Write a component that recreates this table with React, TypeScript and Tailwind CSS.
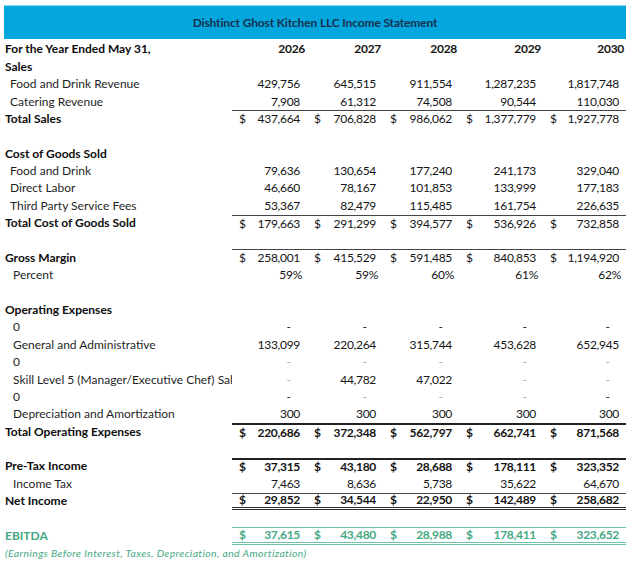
import React from "react";

type Row = {
  label?: string;
  kind?: "bold" | "sub" | "sub2" | "green" | "blank";
  vals?: string[];
  dollar?: boolean;
  boldVals?: boolean;
  top?: "thin" | "thick" | "green";
  bottom?: "double" | "greenDouble";
  dashTone?: string[];
  pct?: boolean;
  years?: boolean;
};

const rows: Row[] = [
  { label: "For the Year Ended May 31,", kind: "bold", vals: ["2026", "2027", "2028", "2029", "2030"], years: true },
  { label: "Sales", kind: "bold" },
  { label: "Food and Drink Revenue", kind: "sub", vals: ["429,756", "645,515", "911,554", "1,287,235", "1,817,748"] },
  { label: "Catering Revenue", kind: "sub", vals: ["7,908", "61,312", "74,508", "90,544", "110,030"] },
  { label: "Total Sales", kind: "bold", vals: ["437,664", "706,828", "986,062", "1,377,779", "1,927,778"], dollar: true, top: "thin" },
  { kind: "blank" },
  { label: "Cost of Goods Sold", kind: "bold" },
  { label: "Food and Drink", kind: "sub", vals: ["79,636", "130,654", "177,240", "241,173", "329,040"] },
  { label: "Direct Labor", kind: "sub", vals: ["46,660", "78,167", "101,853", "133,999", "177,183"] },
  { label: "Third Party Service Fees", kind: "sub", vals: ["53,367", "82,479", "115,485", "161,754", "226,635"] },
  { label: "Total Cost of Goods Sold", kind: "bold", vals: ["179,663", "291,299", "394,577", "536,926", "732,858"], dollar: true, top: "thin" },
  { kind: "blank" },
  { label: "Gross Margin", kind: "bold", vals: ["258,001", "415,529", "591,485", "840,853", "1,194,920"], dollar: true, top: "thin" },
  { label: "Percent", kind: "sub2", vals: ["59%", "59%", "60%", "61%", "62%"], pct: true },
  { kind: "blank" },
  { label: "Operating Expenses", kind: "bold" },
  { label: "0", kind: "sub2", vals: ["-", "-", "-", "-", "-"], dashTone: ["d", "d", "d", "d", "d"] },
  { label: "General and Administrative", kind: "sub2", vals: ["133,099", "220,264", "315,744", "453,628", "652,945"] },
  { label: "0", kind: "sub2", vals: ["-", "-", "-", "-", "-"], dashTone: ["l", "l", "l", "l", "l"] },
  { label: "Skill Level 5 (Manager/Executive Chef) Salary", kind: "sub2", vals: ["-", "44,782", "47,022", "-", "-"], dashTone: ["l", "l", "l", "l", "l"] },
  { label: "0", kind: "sub2", vals: ["-", "-", "-", "-", "-"], dashTone: ["d", "l", "l", "l", "d"] },
  { label: "Depreciation and Amortization", kind: "sub2", vals: ["300", "300", "300", "300", "300"] },
  { label: "Total Operating Expenses", kind: "bold", vals: ["220,686", "372,348", "562,797", "662,741", "871,568"], dollar: true, boldVals: true, top: "thick" },
  { kind: "blank" },
  { label: "Pre-Tax Income", kind: "bold", vals: ["37,315", "43,180", "28,688", "178,111", "323,352"], dollar: true, boldVals: true, top: "thick" },
  { label: "Income Tax", kind: "sub2", vals: ["7,463", "8,636", "5,738", "35,622", "64,670"] },
  { label: "Net Income", kind: "bold", vals: ["29,852", "34,544", "22,950", "142,489", "258,682"], dollar: true, boldVals: true, top: "thin", bottom: "double" },
  { kind: "blank" },
  { label: "EBITDA", kind: "green", vals: ["37,615", "43,480", "28,988", "178,411", "323,652"], dollar: true, boldVals: true, top: "green", bottom: "greenDouble" },
];

function labelClass(kind?: Row["kind"]) {
  switch (kind) {
    case "bold":
      return "font-bold text-[#0d0d0d] pl-[1px]";
    case "sub":
      return "text-[#1f1f1f] pl-[6px]";
    case "sub2":
      return "text-[#1f1f1f] pl-[9px]";
    case "green":
      return "font-bold text-[#45a884] pl-[1px]";
    default:
      return "";
  }
}

function ValueCell({ row, i }: { row: Row; i: number }) {
  const v = row.vals?.[i];
  const topCls =
    row.top === "thin"
      ? "border-t border-[#444]"
      : row.top === "thick"
      ? "border-t-2 border-[#222]"
      : row.top === "green"
      ? "border-t border-[#6cc3a5]"
      : "";
  const bottomCls =
    row.bottom === "double"
      ? "border-b-[3px] border-double border-b-[#333]"
      : row.bottom === "greenDouble"
      ? "border-b-[3px] border-double border-b-[#6cc3a5]"
      : "";
  const color = row.kind === "green" ? "text-[#45a884]" : "text-[#141414]";
  const weight = row.boldVals || row.years ? "font-bold" : "";
  if (!v) return <div className={`${topCls} ${bottomCls}`} />;
  const isDash = v === "-";
  const dashColor = row.dashTone?.[i] === "l" ? "text-[#aaa]" : "text-[#222]";
  return (
    <div className={`flex items-center justify-between ${topCls} ${bottomCls} ${color} ${weight}`}>
      <span className="pl-[7px]">{row.dollar ? "$" : ""}</span>
      {isDash ? (
        <span className={`pr-[16px] ${dashColor}`}>-</span>
      ) : (
        <span className={`tracking-[-0.3px] ${row.years ? "pr-[2px]" : row.pct ? "pr-[5px]" : "pr-[7px]"}`}>{v}</span>
      )}
    </div>
  );
}

export default function App() {
  return (
    <div
      className="w-[632px] h-[570px] bg-white pl-[4px] pt-[5px] text-[12px] leading-none"
      style={{ fontFamily: "Lato, 'Open Sans', sans-serif" }}
    >
      <div className="w-[622px] h-[34px] bg-[#03a6dd] border-t border-[#8fd6ef] flex items-center justify-center font-bold text-[#17324f] text-[12px] tracking-[-0.15px]">
        Dishtinct Ghost Kitchen LLC Income Statement
      </div>
      <div className="grid grid-cols-[228px_75px_76px_76px_84px_83px] w-[622px] mt-[1.8px] auto-rows-[17.38px]">
        {rows.map((row, r) => (
          <React.Fragment key={r}>
            <div className={`flex items-center whitespace-nowrap overflow-hidden ${labelClass(row.kind)}`}>
              {row.label ?? ""}
            </div>
            {[0, 1, 2, 3, 4].map((i) => (
              <ValueCell key={i} row={row} i={i} />
            ))}
          </React.Fragment>
        ))}
        <div className="col-span-6 flex items-center pl-[1px] italic text-[10.4px] text-[#45a884] tracking-[0.4px]">
          (Earnings Before Interest, Taxes, Depreciation, and Amortization)
        </div>
      </div>
    </div>
  );
}
